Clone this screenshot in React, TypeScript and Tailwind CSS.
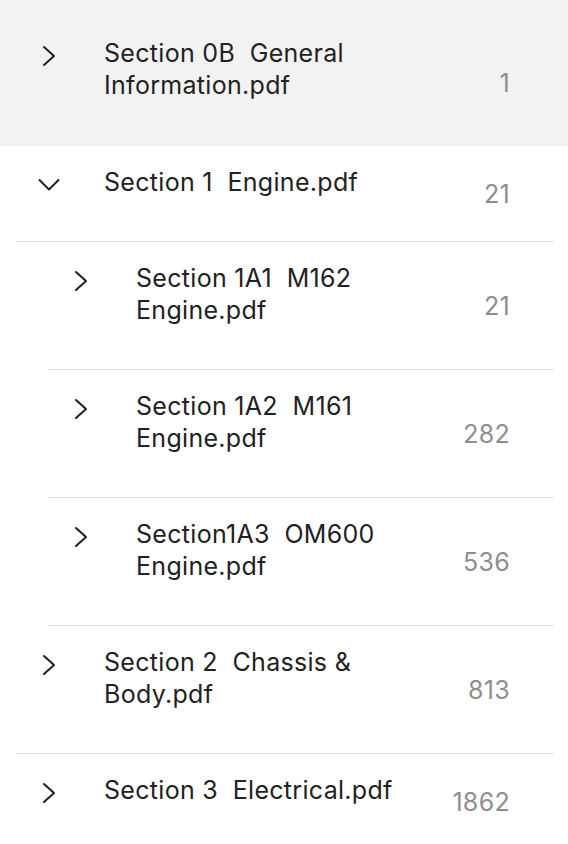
import React from "react";

type Row = {
  lines: string[];
  count: string;
  level: 0 | 1;
  expanded?: boolean;
  highlighted?: boolean;
  border?: boolean;
};

const rows: Row[] = [
  { lines: ["Section 0B  General", "Information.pdf"], count: "1", level: 0, highlighted: true, border: false },
  { lines: ["Section 1  Engine.pdf"], count: "21", level: 0, expanded: true, border: true },
  { lines: ["Section 1A1  M162", "Engine.pdf"], count: "21", level: 1, border: true },
  { lines: ["Section 1A2  M161", "Engine.pdf"], count: "282", level: 1, border: true },
  { lines: ["Section1A3  OM600", "Engine.pdf"], count: "536", level: 1, border: true },
  { lines: ["Section 2  Chassis &", "Body.pdf"], count: "813", level: 0, border: true },
  { lines: ["Section 3  Electrical.pdf"], count: "1862", level: 0, border: false },
];

function Chevron({ down }: { down?: boolean }) {
  return (
    <svg width="24" height="24" viewBox="0 0 24 24" fill="none" stroke="#1f1f1f" strokeWidth="2" strokeLinecap="round" strokeLinejoin="round">
      {down ? <polyline points="2.5,7 12,16.5 21.5,7" /> : <polyline points="7,3 17,12 7,21" />}
    </svg>
  );
}

function TreeRow({ row }: { row: Row }) {
  const inner = (
    <div
      className={
        "flex items-center mr-[14px] " +
        (row.level === 0 ? "ml-4 " : "ml-12 ") +
        (row.border ? "border-b border-[#e3e3e3]" : "")
      }
    >
      <div className={"w-[88px] shrink-0 self-start pl-[21px] " + (row.highlighted ? "pt-[44px]" : "pt-[27px]")}>
        <Chevron down={row.expanded} />
      </div>
      <div className={"flex-1 flex flex-col text-[25px] leading-[32px] tracking-[0.3px] text-[#222222] " + (row.highlighted ? "pt-[37px] pb-[45px]" : "pt-5 pb-[43px]")}>
        {row.lines.map((l, i) => (
          <span key={i} className="whitespace-pre">
            {l}
          </span>
        ))}
      </div>
      <div className={"pr-[44px] text-[25px] leading-[32px] tracking-[0.3px] text-[#8e8e8e] " + (row.highlighted ? "mt-5" : "")}>{row.count}</div>
    </div>
  );
  if (row.highlighted) return <div className="bg-[#f2f2f2]">{inner}</div>;
  return inner;
}

export default function App() {
  return (
    <div className="w-[568px] h-[844px] overflow-hidden bg-white" style={{ fontFamily: "Inter, 'Liberation Sans', sans-serif" }}>
      {rows.map((r, i) => (
        <TreeRow key={i} row={r} />
      ))}
    </div>
  );
}
